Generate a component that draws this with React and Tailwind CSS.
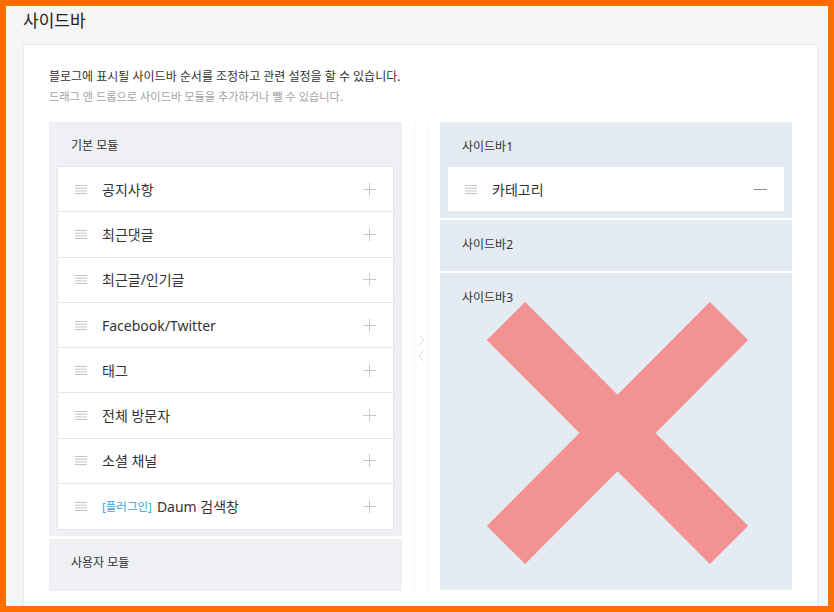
import React from "react";

const FONT = { fontFamily: '"Noto Sans", "Noto Sans CJK KR", sans-serif' };

function Handle() {
  return (
    <svg width="12" height="9" viewBox="0 0 12 9" className="shrink-0">
      <g stroke="#c4c4c4" strokeWidth="1">
        <line x1="0" y1="0.5" x2="12" y2="0.5" />
        <line x1="0" y1="3.2" x2="12" y2="3.2" />
        <line x1="0" y1="5.9" x2="12" y2="5.9" />
        <line x1="0" y1="8.5" x2="12" y2="8.5" />
      </g>
    </svg>
  );
}

function Plus() {
  return (
    <svg width="13" height="13" viewBox="0 0 13 13" className="shrink-0">
      <g stroke="#c8c8c8" strokeWidth="1">
        <line x1="0" y1="6.5" x2="13" y2="6.5" />
        <line x1="6.5" y1="0" x2="6.5" y2="13" />
      </g>
    </svg>
  );
}

function Minus() {
  return (
    <svg width="13" height="13" viewBox="0 0 13 13" className="shrink-0">
      <line x1="0" y1="6.5" x2="13" y2="6.5" stroke="#8a8a8a" strokeWidth="1" />
    </svg>
  );
}

const items = [
  { label: "공지사항" },
  { label: "최근댓글" },
  { label: "최근글/인기글" },
  { label: "Facebook/Twitter" },
  { label: "태그" },
  { label: "전체 방문자" },
  { label: "소셜 채널" },
  { label: "Daum 검색창", tag: "[플러그인]" },
];

export default function App() {
  return (
    <div
      style={FONT}
      className="w-[834px] h-[612px] overflow-hidden box-border border-[6px] border-[#ff6c00] bg-[#f4f5f7] flex flex-col"
    >
      <div className="h-[38px] shrink-0 pl-[17px] pt-[2px] text-[17px] leading-[26px] text-[#222]">
        사이드바
      </div>
      <div className="relative ml-[17px] w-[795px] flex-1 bg-white border border-[#e9eaed] border-b-0 pl-[25px] pt-[23px]">
        <div className="text-[12px] leading-[18px] text-[#333]">
          블로그에 표시될 사이드바 순서를 조정하고 관련 설정을 할 수 있습니다.
        </div>
        <div className="mt-[2px] text-[11.2px] leading-[18px] text-[#a3a3a3]">
          드래그 앤 드롭으로 사이드바 모듈을 추가하거나 뺄 수 있습니다.
        </div>

        <div className="mt-[16px] flex">
          {/* Left column */}
          <div className="w-[353px] shrink-0 flex flex-col gap-[3px]">
            <div className="bg-[#eff0f3] pb-[6px]">
              <div className="h-[44px] pt-[4px] pl-[22px] flex items-center text-[12px] text-[#333]">
                기본 모듈
              </div>
              <div className="mx-[8px] bg-white border border-[#e4e5e8]">
                {items.map((it, i) => (
                  <div
                    key={i}
                    className={
                      "h-[45.3px] flex items-center pl-[17px] pr-[17px] box-border " +
                      (i < items.length - 1 ? "border-b border-[#e6e6e6]" : "")
                    }
                  >
                    <Handle />
                    <div className="ml-[15px] flex-1 flex items-center text-[14px] text-[#333]">
                      {it.tag && (
                        <span className="text-[11.5px] text-[#3aa5d8] mr-[5px]">{it.tag}</span>
                      )}
                      <span>{it.label}</span>
                    </div>
                    <Plus />
                  </div>
                ))}
              </div>
            </div>
            <div className="h-[52px] bg-[#eff0f3] pl-[22px] pb-[4px] flex items-center text-[12px] text-[#333]">
              사용자 모듈
            </div>
          </div>

          {/* Middle divider */}
          <div className="w-[38px] shrink-0 flex justify-center">
            <div className="w-[14px] border-x border-[#f7f7f8] flex flex-col items-center pt-[212px] gap-[4px]">
              <svg width="7" height="12" viewBox="0 0 7 12">
                <polyline points="1,1 6,6 1,11" fill="none" stroke="#dcdcdc" strokeWidth="1" />
              </svg>
              <svg width="7" height="12" viewBox="0 0 7 12">
                <polyline points="6,1 1,6 6,11" fill="none" stroke="#dcdcdc" strokeWidth="1" />
              </svg>
            </div>
          </div>

          {/* Right column */}
          <div className="relative w-[352px] shrink-0 flex flex-col gap-[2px]">
            <div className="bg-[#e4ebf2] pb-[7px]">
              <div className="h-[45px] pt-[4px] pl-[22px] flex items-center text-[12px] text-[#333]">
                사이드바1
              </div>
              <div className="mx-[8px] h-[44px] bg-white flex items-center pl-[17px] pr-[17px]">
                <Handle />
                <div className="ml-[15px] flex-1 text-[14px] text-[#333]">카테고리</div>
                <Minus />
              </div>
            </div>
            <div className="h-[51px] bg-[#e4ebf2] pl-[22px] pb-[2px] flex items-center text-[12px] text-[#333]">
              사이드바2
            </div>
            <div className="h-[317px] bg-[#e4ebf2] pl-[22px] pt-[16px] text-[12px] leading-[18px] text-[#333]">
              사이드바3
            </div>

            {/* X overlay */}
            <svg
              className="absolute left-[47px] top-[180px] pointer-events-none"
              width="262"
              height="263"
              viewBox="0 0 262 263"
            >
              <g stroke="#f29292" strokeWidth="54">
                <line x1="19" y1="19" x2="242" y2="243" />
                <line x1="242" y1="19" x2="19" y2="243" />
              </g>
            </svg>
          </div>
        </div>
      </div>
    </div>
  );
}
